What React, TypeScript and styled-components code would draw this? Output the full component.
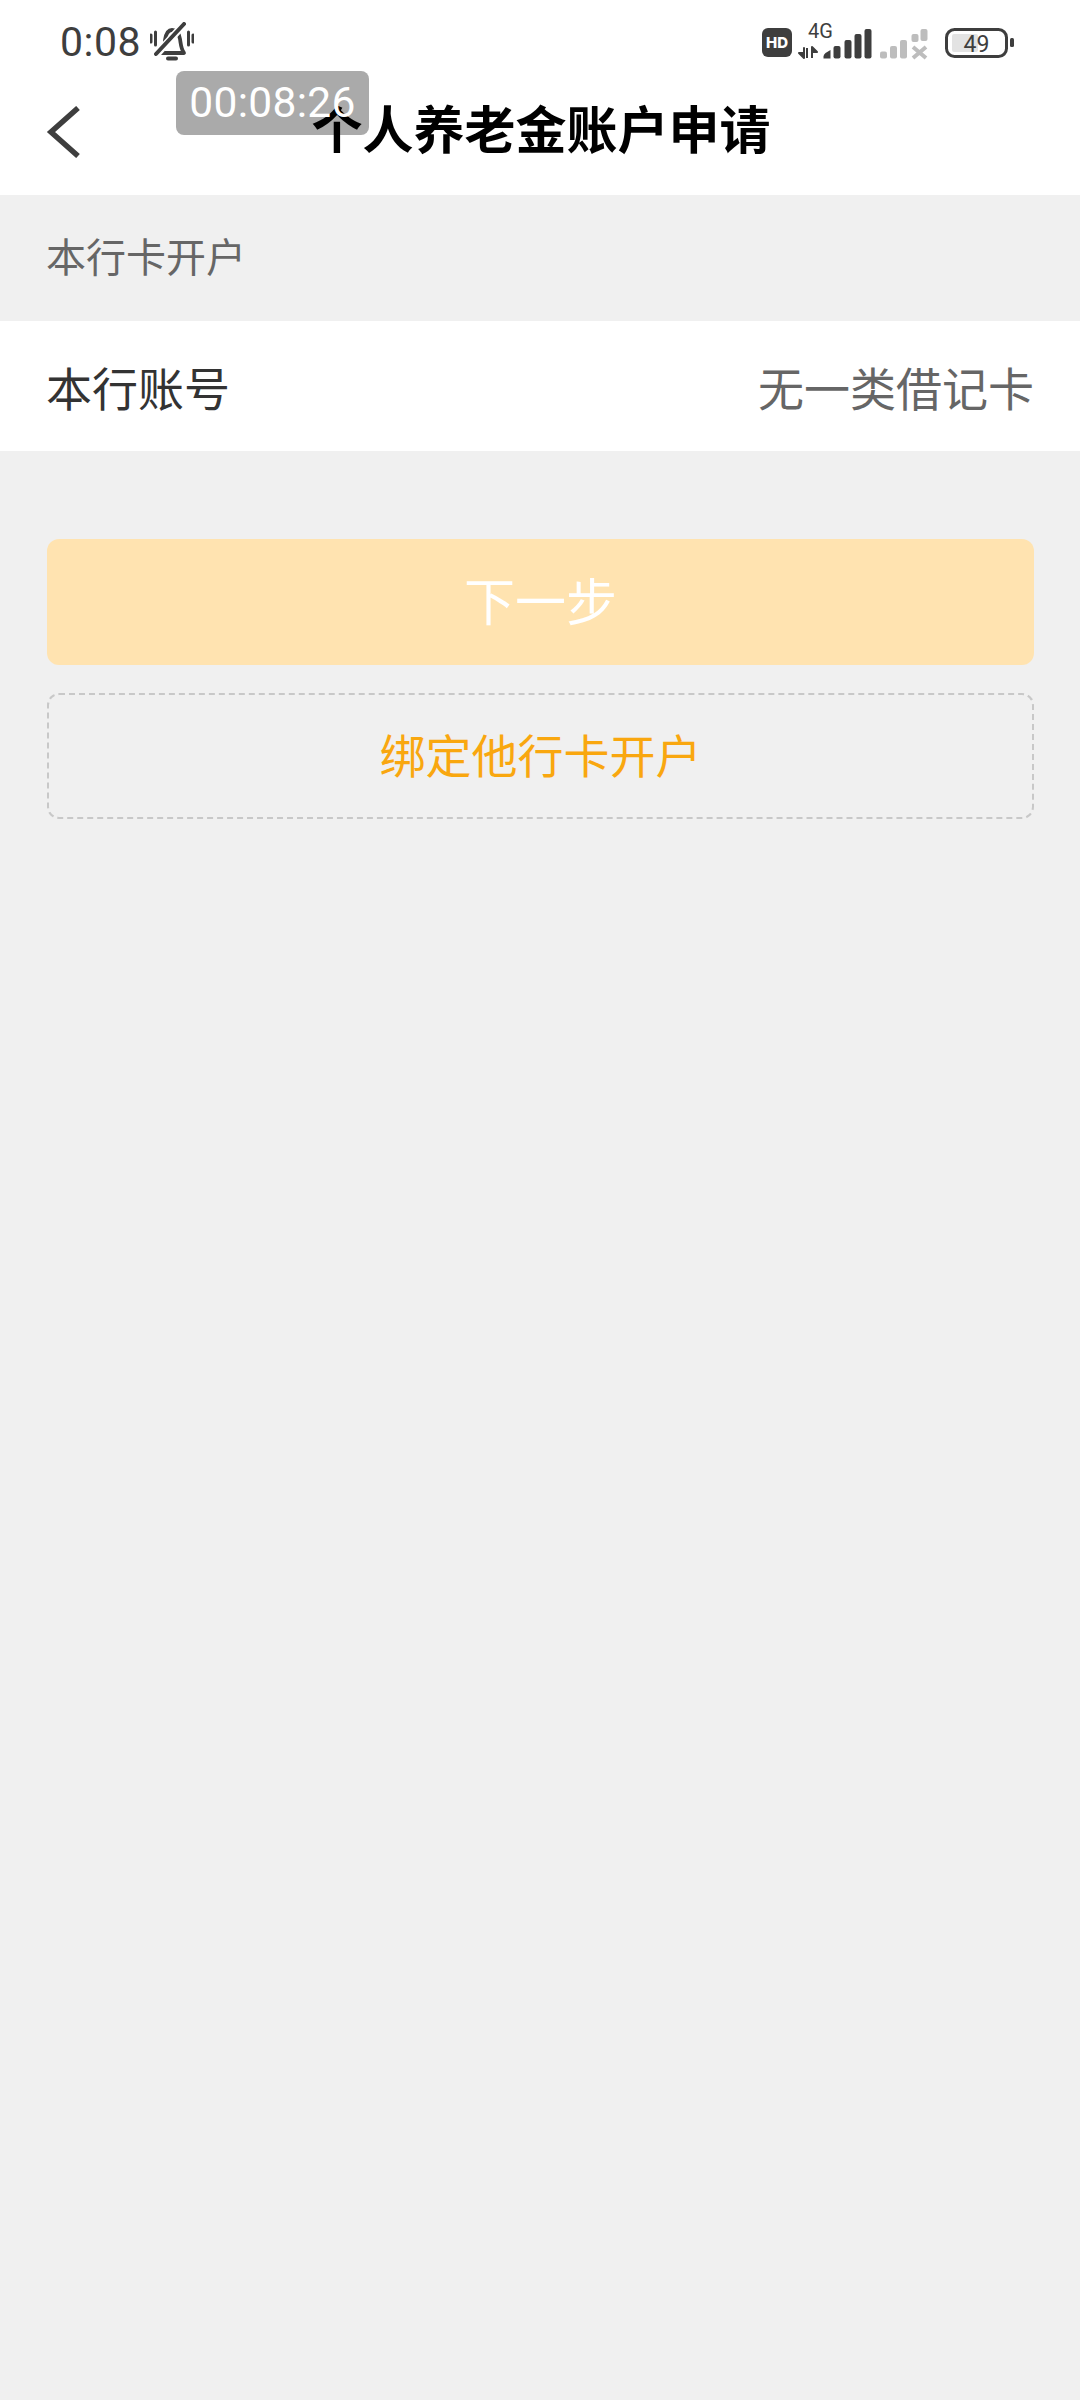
import React from "react";
import styled, { createGlobalStyle } from "styled-components";

const Global = createGlobalStyle`
  html, body { margin: 0; padding: 0; background: #f0f0f0; }
  body { font-family: "Liberation Sans", "Noto Sans CJK SC", sans-serif; }
`;
const Page = styled.div`
  width: 1080px; height: 2400px; background: #f0f0f0; overflow: hidden;
`;
const Top = styled.header`
  position: relative; background: #fff; height: 195px; box-sizing: border-box;
  display: flex; flex-direction: column;
`;
const StatusBar = styled.div`
  height: 84px; display: flex; align-items: flex-start; justify-content: space-between;
  padding: 0 58px 0 60px;
`;
const StatusLeft = styled.div`display: flex; align-items: center; gap: 9px; height: 84px;`;
const Clock = styled.span`
  font-family: Roboto, sans-serif; font-size: 41px; font-weight: 400; line-height: 84px; color: #3e3e3e; letter-spacing: 0.5px;
`;
const NavBar = styled.div`
  height: 94px; display: flex; align-items: center; justify-content: center; position: relative;
`;
const Back = styled.svg`position: absolute; left: 46px; top: 22px;`;
const Title = styled.h1`
  position: relative; z-index: 1; margin: 0 0 0 2px; font-size: 51px; font-weight: 700; color: #000;
  font-family: "Noto Sans CJK SC", sans-serif; line-height: 60px; white-space: nowrap; transform: translateY(-4px);
`;
const TimerBadge = styled.div`
  position: absolute; left: 176px; top: 71px; width: 193px; height: 64px; background: #aaaaaa; border-radius: 8px;
  display: flex; align-items: center; justify-content: center;
`;
const TimerText = styled.span`
  position: relative; z-index: 2; color: #fff; font-family: Roboto, sans-serif; font-size: 42.5px; letter-spacing: 0.3px; line-height: 64px;
`;
const SectionLabel = styled.div`
  height: 126px; box-sizing: border-box; padding: 0 0 7px 46px; display: flex; align-items: center; font-size: 40px; color: #666;
  font-family: "Noto Sans CJK SC", sans-serif;
`;
const Row = styled.div`
  height: 130px; background: #fff; padding: 0 46px; display: flex; align-items: center; justify-content: space-between;
  font-family: "Noto Sans CJK SC", sans-serif; font-size: 46px;
`;
const RowLabel = styled.span`color: #333;`;
const RowValue = styled.span`color: #666;`;
const Actions = styled.div`
  padding: 88px 46px 0 47px; display: flex; flex-direction: column; gap: 28px;
`;
const Primary = styled.button`
  height: 126px; border: 0; border-radius: 12px; background: #ffe3b0; color: #fff; font-size: 51px; padding: 0 0 7px;
  font-family: "Noto Sans CJK SC", sans-serif;
`;
const Secondary = styled.button`
  height: 126px; box-sizing: border-box; border: 2.5px dashed #c8c8c8; border-radius: 12px; background: transparent;
  color: #f9a70f; font-size: 46px; padding: 0 0 7px; font-family: "Noto Sans CJK SC", sans-serif;
`;
const StatusRight = styled.svg`display: block; margin-top: 1px;`;

const MuteBell = () => (
  <svg width="44" height="40" viewBox="0 0 44 40" fill="none" stroke="#3e3e3e" strokeLinecap="round">
    <path d="M1 13v7M5.5 10v13M38.5 10v13M43 13v7" strokeWidth="3" />
    <path d="M11 31c3-3 4-7 4-13 1-6 3-10 7-10s7 3 8 9c1 6 1 10 4 14z" strokeWidth="3.8" strokeLinejoin="round" />
    <path d="M18 36.500h8" strokeWidth="4" />
    <path d="M6 33 35 1" stroke="#fff" strokeWidth="7.500" />
    <path d="M6 32 34 2" strokeWidth="4" />
  </svg>
);

const Status = () => (
  <StatusRight width="262" height="60" viewBox="0 0 262 60">
    <rect x="2" y="27" width="30" height="29" rx="6" fill="#3e3e3e" />
    <text x="17" y="47" textAnchor="middle" fontFamily="Inter, sans-serif" fontWeight="800" fontSize="15" fill="#fff">HD</text>
    <text x="48" y="37" fontFamily="Roboto, sans-serif" fontSize="20" fill="#3e3e3e">4G</text>
    <path d="M44 47v10l-5-5h5zM47 57V47M52 46v11M52 46l5 5h-5z" fill="#3e3e3e" stroke="#3e3e3e" strokeWidth="2" strokeLinejoin="round" />
    <g fill="#3e3e3e">
      <path d="M63.500 55.500q0-2 2-3.500l5-3v8.500h-7z" />
      <rect x="73.500" y="45" width="7" height="12.500" rx="2" />
      <rect x="84.500" y="39" width="7" height="18.500" rx="2" />
      <rect x="94.500" y="33" width="7" height="24.500" rx="2" />
      <rect x="104.500" y="28" width="7" height="29.500" rx="2" />
    </g>
    <g fill="#bdbdbd">
      <rect x="120" y="50.500" width="7" height="7" rx="2" />
      <rect x="130" y="45" width="7" height="12.500" rx="2" />
      <rect x="140" y="39" width="7" height="18.500" rx="2" />
      <rect x="151.500" y="33" width="7" height="8" rx="2" />
      <rect x="160.500" y="28" width="7" height="12" rx="2" />
      <path d="M153 46l13 11M166 46l-13 11" stroke="#bdbdbd" strokeWidth="4" fill="none" />
    </g>
    <rect x="186.500" y="28.500" width="60" height="27" rx="8" fill="#fff" stroke="#3e3e3e" strokeWidth="3" />
    <rect x="192" y="33" width="26" height="18" rx="2" fill="#e3e3e3" />
    <text x="216.500" y="50.500" textAnchor="middle" fontFamily="Roboto, sans-serif" fontSize="23" fill="#3e3e3e">49</text>
    <rect x="250" y="37" width="4" height="9" rx="1.500" fill="#3e3e3e" />
  </StatusRight>
);

export default function App() {
  return (
    <Page>
      <Global />
      <Top>
        <StatusBar>
          <StatusLeft>
            <Clock>0:08</Clock>
            <MuteBell />
          </StatusLeft>
          <Status />
        </StatusBar>
        <NavBar>
          <Back width="34" height="52" viewBox="0 0 34 52" fill="none" stroke="#3e3e3e" strokeWidth="5.500">
            <path d="M32 2 5 26l27 24" />
          </Back>
          <Title>个人养老金账户申请</Title>
        </NavBar>
        <TimerBadge>
          <TimerText>00:08:26</TimerText>
        </TimerBadge>
      </Top>
      <SectionLabel>本行卡开户</SectionLabel>
      <Row>
        <RowLabel>本行账号</RowLabel>
        <RowValue>无一类借记卡</RowValue>
      </Row>
      <Actions>
        <Primary>下一步</Primary>
        <Secondary>绑定他行卡开户</Secondary>
      </Actions>
    </Page>
  );
}
